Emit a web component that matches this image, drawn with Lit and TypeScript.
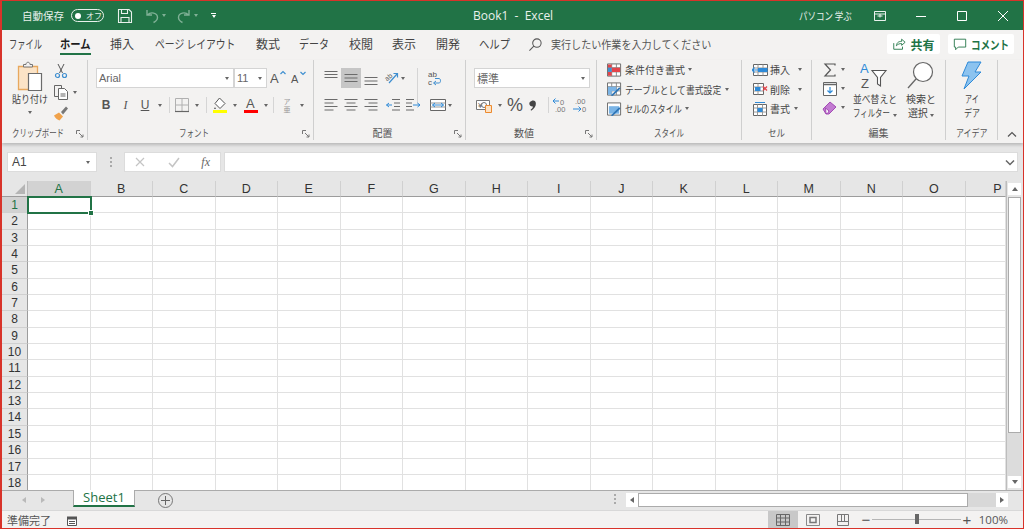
import { LitElement, html, css, svg } from 'lit';
import { customElement } from 'lit/decorators.js';

// small icon helper, every ribbon icon is drawn in a 16x16 box unless a size is given
const icon = (body: unknown, size = 16, box = 16) => html`<svg class="ico" width=${size} height=${size} viewBox="0 0 ${box} ${box}">${body}</svg>`;
const drop = html`<span class="drop"></span>`;
const launcher = html`<svg class="launch" width="8" height="8" viewBox="0 0 8 8" fill="none" stroke="#777"><path d="M.5 4V.5H4M3 3l4 4M7 4.5V7H4.5"/></svg>`;

// the reference font has narrow kana, so wide CJK text is squeezed to the measured width
const sq = (text: string, natural: number, width: number) => html`<span class="sq" style="width:${width}px"><span style="transform:scaleX(${width / natural})">${text}</span></span>`;

const lines = (rows: [number, number][], offsets: number[]) => svg`<g stroke="#6b6b6b">${rows.map(([a, b], i) => svg`<path d="M${a} ${offsets[i]}H${b}"/>`)}</g>`;

const icons = {
  save: svg`<g fill="none" stroke="#fff" stroke-width="1.1" opacity=".9"><path d="M1.5 1.5H12l2.5 2.5v10.5h-13z"/><path d="M4.5 1.5v4h6v-4M4 14.5v-5h8v5"/></g>`,
  undo: svg`<g fill="none" stroke="#7fb095" stroke-width="1.4"><path d="M3 2v5h5M3.5 7c3-3.5 10-2.5 10 2.5 0 2.5-2 4-4 5"/></g>`,
  redo: svg`<g fill="none" stroke="#7fb095" stroke-width="1.4"><path d="M13 2v5H8M12.5 7c-3-3.5-10-2.5-10 2.5 0 2.5 2 4 4 5"/></g>`,
  search: svg`<g fill="none" stroke="#555" stroke-width="1.1"><circle cx="9.5" cy="6.5" r="4.5"/><path d="M6.2 9.8L1.5 14.5"/></g>`,
  share: svg`<g fill="none" stroke="#217346"><path d="M2 7v7h10v-3M5 10c.5-4 3-5 6-5V2.5L15 6l-4 3.5v-2c-2.5 0-4 .5-6 2.5z"/></g>`,
  comment: svg`<path d="M1.5 2.5h13v9H6l-3 3v-3H1.5z" fill="none" stroke="#217346"/>`,
  paste: svg`<path d="M3.5 5.5h19v23h-19z" fill="#fbe3c6" stroke="#e8a85e" stroke-width="1.3"/><path d="M8.5 6V3.5H11c0-3 4-3 4 0h2.5V6z" fill="#f3f2f1" stroke="#777"/><path d="M13.5 12.5h13v17h-13z" fill="#fff" stroke="#6b6b6b" stroke-width="1.2"/>`,
  scissors: svg`<g fill="none" stroke="#555"><path d="M5 1l4.5 9M11 1L6.5 10"/></g><g fill="none" stroke="#3f8fd0" stroke-width="1.2"><circle cx="4.5" cy="12.5" r="2"/><circle cx="11.5" cy="12.5" r="2"/></g>`,
  copy: svg`<g fill="#f3f2f1" stroke="#666"><path d="M1.5 1.5h7v11h-7z"/><path d="M5.5 4.5h6l3 3v8h-9z" fill="#fff"/></g><path d="M7.5 10h5M7.5 12h5" stroke="#666"/>`,
  brush: svg`<path d="M1 10.5l5-3 4 4-3.5 4c-2-.5-4.5-2.5-5.5-5z" fill="#f0a24b"/><path d="M8 7l5-5.5 2 2-5 6z" fill="#777"/>`,
  growUp: svg`<text x="0" y="13" font-size="13" fill="#555" font-family="Liberation Sans">A</text><path d="M10.5 4L13 1.5 15.5 4" fill="none" stroke="#3f8fd0" stroke-width="1.2"/>`,
  growDown: svg`<text x="1" y="13" font-size="11" fill="#555" font-family="Liberation Sans">A</text><path d="M10.5 2L13 4.5 15.5 2" fill="none" stroke="#3f8fd0" stroke-width="1.2"/>`,
  border: svg`<path d="M1.5 1.5h13v13h-13zM8 1.5v13M1.5 8h13" fill="none" stroke="#b0b0b0"/><path d="M1 14.5h14" stroke="#666" stroke-width="1.2"/>`,
  fill: svg`<path d="M7.5 1L13 6.5l-5 5-5-5z" fill="#fff" stroke="#555"/><path d="M2 12l1-2 1 2z" fill="#555"/><path d="M1 13h14v3H1z" fill="#ffff00"/>`,
  fontColor: svg`<text x="3" y="11" font-size="13" fill="#555" font-family="Liberation Sans">A</text><path d="M1 13h14v3H1z" fill="#ff0000"/>`,
  orient: svg`<text x="2" y="10" font-size="7" fill="#555" font-family="Liberation Sans" transform="rotate(-40 5 8)">ab</text><path d="M6 13L14 4M10.5 3.5h4v4" fill="none" stroke="#3f8fd0" stroke-width="1.2"/>`,
  wrap: svg`<text x="2" y="7" font-size="8" fill="#555" font-family="Liberation Sans">ab</text><text x="2" y="15" font-size="8" fill="#555" font-family="Liberation Sans">c</text><path d="M8 13h5c2 0 2-4.5 0-4.5H9M10 11l-2.5 2 2.5 2" fill="none" stroke="#3f8fd0"/>`,
  merge: svg`<path d="M.5 2.5h15v11H.5z" fill="#fff" stroke="#666"/><path d="M.5 6h15M.5 10h15" stroke="#999"/><path d="M2.5 8h11M5 6L2.5 8 5 10M11 6l2.5 2L11 10" fill="none" stroke="#2e8ad8"/>`,
  outdent: svg`${lines([[7, 15], [9, 15], [9, 15], [7, 15]], [2.5, 6, 9.5, 13])}<path d="M7 8H1.5M4 6L1.5 8 4 10" fill="none" stroke="#2e8ad8"/>`,
  indent: svg`${lines([[1, 9], [1, 7], [1, 7], [1, 9]], [2.5, 6, 9.5, 13])}<path d="M8 8h7M12.5 6L15 8l-2.5 2" fill="none" stroke="#2e8ad8"/>`,
  account: svg`<path d="M.5 3.5h13v9H.5z" fill="#fff" stroke="#777"/><text x="2" y="11" font-size="8" fill="#666" font-family="Liberation Sans">¥</text><circle cx="8" cy="8" r="2.5" fill="none" stroke="#777"/><path d="M9.5 8.5h6v7h-6z" fill="#fde2c3" stroke="#ec8a2f"/>`,
  comma: svg`<path d="M4 3.5c2.5-1.5 5 0 5 3 0 3-2 6-5.5 8l-.5-1c1.5-1 2.5-2.5 2.700-3.800C3.500 10 1.500 8.500 1.500 6.500c0-1.500 1-2.500 2.500-3z" fill="#444"/>`,
  decUp: svg`<text x="8" y="7.5" font-size="7.5" fill="#777" font-family="Liberation Sans">0</text><text x="3" y="15" font-size="7.5" fill="#777" font-family="Liberation Sans">.00</text><path d="M7 4H1M3.5 1.5L1 4l2.5 2.5" fill="none" stroke="#2e8ad8"/>`,
  decDown: svg`<text x="3" y="7" font-size="7.5" fill="#777" font-family="Liberation Sans">.00</text><text x="10" y="15" font-size="7.5" fill="#777" font-family="Liberation Sans">0</text><path d="M1 12h8M6.5 9.5L9 12l-2.5 2.5" fill="none" stroke="#2e8ad8"/>`,
  condFmt: svg`<path d="M.5 1.5h14v13H.5z" fill="#fff" stroke="#666"/><path d="M1 5.500h13M1 10h13M5 1.500v13M10 1.500v13" stroke="#888"/><path d="M1 2h4v3.500H1zM5 5.500h9V10H5zM1 10h4v4H1z" fill="#e4444a"/><path d="M1 5.500h4V10H1z" fill="#3f8fd0"/>`,
  tableFmt: svg`<path d="M.5 1.5h14v13H.5z" fill="#fff" stroke="#666"/><path d="M1 5.500h13M1 10h13M5 1.500v13M10 1.500v13" stroke="#888"/><path d="M1 5.500h9V10H5v4H1z" fill="#7ab4e6"/><path d="M4 15l9-9 1.5 1.500L6 15.500z" fill="#2e75b6"/>`,
  cellFmt: svg`<path d="M.5 1.5h14v13H.5z" fill="#fff" stroke="#666"/><path d="M2 5h11v8H2z" fill="#7ab4e6"/><path d="M4 15l9-9 1.5 1.500L6 15.500z" fill="#2e75b6"/>`,
  cellInsert: svg`<path d="M1.5 2.5h14v11h-14z" fill="#fff" stroke="#666"/><path d="M1.5 6h14M1.5 10h14M6 2.5v11M11 2.5v11" stroke="#999"/><path d="M6 6h9.500v4H6z" fill="#2e8ad8"/><path d="M6 8H0M2.500 5.500L0 8l2.500 2.500" fill="none" stroke="#2e8ad8" stroke-width="1.2"/>`,
  cellDelete: svg`<path d="M1.5 2.5h10v11h-10z" fill="#fff" stroke="#666"/><path d="M1.5 6h10M1.5 10h10M6 2.5v11" stroke="#999"/><path d="M3 6h5.500v4H3z" fill="#2e8ad8"/><path d="M11 5.500l4 4M15 5.500l-4 4" stroke="#e4444a" stroke-width="1.3"/>`,
  cellFormat: svg`<path d="M1.5 3.5h13v11h-13z" fill="#fff" stroke="#666"/><path d="M1.5 7h13M1.5 11h13M5.5 3.5v11M10.5 3.5v11" stroke="#999"/><path d="M5.5 7h5v4h-5z" fill="#2e8ad8"/><path d="M3 1.5h10" stroke="#2e8ad8"/>`,
  sum: svg`<path d="M13 3.5V2H3l5.5 6L3 14h10v-1.5" fill="none" stroke="#555" stroke-width="1.2"/>`,
  fillDown: svg`<path d="M1.5 1.5h13v13h-13z" fill="#fff" stroke="#666"/><path d="M1.5 3.5h13" stroke="#666" stroke-width="1.5"/><path d="M8 6v6M5.5 9.5L8 12l2.5-2.5" fill="none" stroke="#2e8ad8" stroke-width="1.2"/>`,
  clear: svg`<path d="M1 9l7-7 6 5-7 7H4z" fill="#c27bd1" stroke="#a24ab4"/><path d="M3.5 8L7 11l-1.5 2.5H4z" fill="#fff" stroke="#a24ab4"/>`,
  sort: svg`<text x="0" y="12" font-size="13" fill="#2e8ad8" font-family="Liberation Sans">A</text><text x="1" y="27" font-size="13" fill="#555" font-family="Liberation Sans">Z</text><path d="M12 9.5h14l-5.5 7V25l-3-2v-6.5z" fill="#fff" stroke="#555" stroke-width="1.1"/>`,
  find: svg`<circle cx="17" cy="11" r="9.5" fill="#fff" stroke="#666" stroke-width="1.2"/><path d="M10 18l-8 9" stroke="#666" stroke-width="1.3"/>`,
  idea: svg`<path d="M11 1h13l-6 10h6L7 28l5-13H5z" fill="#8cc3ef" stroke="#2e8ad8"/>`,
};

const COLUMNS = ['A', 'B', 'C', 'D', 'E', 'F', 'G', 'H', 'I', 'J', 'K', 'L', 'M', 'N', 'O', 'P'];
const ROWS = Array.from({ length: 18 }, (_, i) => i + 1);
// label, natural width at 12px, width in the picture, gap after it
const TABS: [string, number, number, number][] = [
  ['ファイル', 48, 33, 18],
  ['ホーム', 36, 31, 19],
  ['挿入', 24, 24, 21],
  ['ページ レイアウト', 98, 80, 21],
  ['数式', 24, 24, 19],
  ['データ', 36, 30, 20],
  ['校閲', 24, 24, 19],
  ['表示', 24, 24, 20],
  ['開発', 24, 24, 19],
  ['ヘルプ', 36, 31, 18],
];

@customElement('app-root')
export class AppRoot extends LitElement {
  static styles = css`
    :host {
      display: block;
      width: 1024px;
      height: 529px;
      box-sizing: border-box;
      overflow: hidden;
      border: solid #d8332a;
      border-width: 1px 1px 1px 2px;
      background: #e6e6e6;
      font-family: "Noto Sans CJK JP", "Liberation Sans", sans-serif;
      font-size: 11px;
      color: #444;
    }
    .ico { display: block; flex: none; }
    .drop {
      display: inline-block;
      flex: none;
      width: 0;
      height: 0;
      border: 2.5px solid transparent;
      border-top: 3px solid #666;
      border-bottom: 0;
    }
    .sq { display: inline-block; flex: none; white-space: pre; text-align: left; }
    .sq > span { display: inline-block; transform-origin: 0 50%; }

    /* title bar */
    .title {
      height: 29px;
      background: #217346;
      color: #e9f1ec;
      display: flex;
      align-items: center;
      font-size: 10.5px;
      padding-left: 20px;
      position: relative;
    }
    .toggle {
      width: 33px;
      height: 13px;
      box-sizing: border-box;
      border: 1px solid #e9f1ec;
      border-radius: 7px;
      margin-left: 7px;
      display: flex;
      align-items: center;
      gap: 5px;
      padding-left: 3px;
      font-size: 8px;
    }
    .toggle i { width: 6px; height: 6px; border-radius: 50%; background: #fff; flex: none; }
    .title .save { margin-left: 13px; }
    .title .undo { margin-left: 11px; }
    .title .dim { border-top-color: #7fb095; margin-left: 2px; }
    .title .redo { margin-left: 10px; }
    .more { margin-left: 13px; width: 5px; display: flex; flex-direction: column; align-items: center; gap: 1px; }
    .more i { width: 5px; height: 1px; background: #fff; }
    .more .drop { border-top-color: #fff; }
    .doc { position: absolute; left: 471px; font-family: "Open Sans", sans-serif; font-size: 12px; white-space: pre; }
    .winctl { margin-left: auto; display: flex; align-items: center; }
    .user { margin-right: 5px; }
    .winbtn { width: 41px; display: flex; justify-content: center; }

    /* tab row */
    .tabs {
      height: 30px;
      box-sizing: border-box;
      padding: 0 0 2px 7px;
      background: #f3f2f1;
      display: flex;
      align-items: center;
      font-size: 12px;
      color: #444;
    }
    .tab { position: relative; white-space: nowrap; line-height: 28px; flex: none; }
    .tab.on { font-weight: 700; color: #1d1d1d; }
    .tab.on::after {
      content: '';
      position: absolute;
      left: 0;
      right: 0;
      bottom: 3px;
      height: 2px;
      background: #217346;
    }
    .tell { display: flex; align-items: center; gap: 8px; font-size: 11px; color: #555; }
    .actions { margin-left: auto; margin-right: 9px; display: flex; gap: 8px; }
    .pill {
      height: 20px;
      background: #fff;
      border-radius: 2px;
      display: flex;
      align-items: center;
      justify-content: center;
      gap: 4px;
      font-weight: 700;
      color: #217346;
      font-size: 12px;
    }
    .pill.share { width: 53px; }
    .pill.note { width: 66px; }

    /* ribbon */
    .ribbon {
      height: 83px;
      background: #f3f2f1;
      display: flex;
      box-shadow: 0 2px 3px rgba(0, 0, 0, .2);
      position: relative;
    }
    .group {
      flex: none;
      display: flex;
      flex-direction: column;
      box-sizing: border-box;
      border-right: 1px solid #cfcfcf;
      margin-bottom: 3px;
      position: relative;
    }
    .body { flex: 1; display: flex; min-height: 0; }
    .cap { text-align: center; font-size: 10px; line-height: 14px; height: 14px; color: #555; }
    .cap.lnch { padding-right: 14px; }
    .launch { position: absolute; right: 3px; bottom: 2px; }
    .row { display: flex; align-items: center; height: 20px; }
    .stack { display: flex; flex-direction: column; }
    .vsep { width: 1px; height: 16px; background: #d5d5d5; flex: none; }
    .big {
      display: flex;
      flex-direction: column;
      align-items: center;
      padding-top: 1px;
      font-size: 10px;
      line-height: 14px;
      text-align: center;
      white-space: nowrap;
      color: #444;
    }
    .big .ico { margin-bottom: 1px; }

    .g-clip { width: 86px; }
    .g-clip .body { padding-left: 5px; }
    .g-clip .big { width: 46px; }
    .g-clip .big .drop { margin-top: 5px; }
    .g-clip .stack { padding-top: 3px; gap: 5px; }
    .g-clip .row { gap: 4px; height: 16px; }

    .g-font { width: 226px; }
    .g-font .body { padding-left: 8px; }
    .g-font .stack, .g-num .stack, .g-align .stack { padding-top: 8px; gap: 7px; }
    .select {
      box-sizing: border-box;
      height: 20px;
      background: #fff;
      border: 1px solid #d4d4d4;
      display: flex;
      align-items: center;
      justify-content: space-between;
      padding: 0 4px 0 2px;
      color: #666;
      font-family: "Liberation Sans", sans-serif;
      font-size: 11px;
      flex: none;
    }
    .select.jp { font-family: "Noto Sans CJK JP", sans-serif; }
    .tool { display: flex; justify-content: center; align-items: center; flex: none; }
    .b { font: 700 12px "Liberation Sans", sans-serif; color: #555; }
    .i { font: italic 12px "Liberation Serif", serif; color: #555; }
    .u { font: 12px "Liberation Sans", sans-serif; color: #555; text-decoration: underline; }
    .phon { display: flex; flex-direction: column; font-size: 7px; line-height: 8px; color: #999; text-align: center; }

    .g-align { width: 152px; }
    .g-align .body { padding-left: 7px; }
    .g-align .tool { width: 20px; height: 20px; }
    .g-align .tool.on { background: #c6c6c6; }

    .g-num { width: 131px; }
    .g-num .body { padding-left: 8px; }
    .pct { font: 18px "Liberation Sans", sans-serif; color: #555; }

    .g-style { width: 145px; }
    .g-style .body { padding-left: 10px; }
    .g-style .row { gap: 3px; height: 19.5px; white-space: nowrap; font-size: 10px; }
    .g-style .ico { width: 15px; height: 16px; }
    .g-cell { width: 70px; }
    .g-cell .body { padding-left: 10px; }
    .g-cell .row { gap: 2px; height: 19.5px; white-space: nowrap; font-size: 10px; }
    .g-edit { width: 134px; }
    .g-edit .stack { padding-left: 10px; width: 39.5px; box-sizing: border-box; flex: none; }
    .g-edit .row { gap: 3px; height: 19px; }
    .g-idea { width: 52px; }
    .g-idea .big { width: 100%; }
    .collapse { position: absolute; right: 6px; bottom: 5px; }

    /* formula bar */
    .formula {
      height: 38px;
      box-sizing: border-box;
      padding: 9px 5px 0 5px;
      display: flex;
      background: #e6e6e6;
      align-items: flex-start;
    }
    .box {
      height: 20px;
      box-sizing: border-box;
      background: #fff;
      border: 1px solid #dcdcdc;
      display: flex;
      align-items: center;
    }
    .name { width: 90px; justify-content: space-between; padding: 0 6px 0 4px; font: 12px "Liberation Sans", sans-serif; color: #444; }
    .dots { width: 27px; display: flex; justify-content: center; padding-top: 5px; }
    .dots i, .hdots i { display: block; width: 2px; height: 2px; background: #aaa; margin-bottom: 2px; }
    .fx { width: 97px; justify-content: space-between; padding: 0 10px 0 8px; margin-right: 3px; }
    .fx em { font: italic 12px "Liberation Serif", serif; color: #666; }
    .input { flex: 1; justify-content: flex-end; padding-right: 2px; }

    /* sheet */
    .sheet { display: flex; height: 309px; }
    .grid {
      width: 1004px;
      flex: none;
      display: grid;
      grid-template-columns: 26px repeat(15, 62.5px) 40px;
      grid-template-rows: 16px;
      grid-auto-rows: 16.35px;
      background: #fff;
      overflow: hidden;
      align-content: start;
      font: 12px "Liberation Sans", sans-serif;
      color: #333;
    }
    .corner, .ch { box-sizing: border-box; background: #e6e6e6; border-bottom: 1px solid #9c9c9c; }
    .corner { position: relative; border-right: 1px solid #bbb; }
    .corner::after {
      content: '';
      position: absolute;
      right: 2px;
      bottom: 2px;
      border: solid transparent;
      border-width: 0 0 10px 10px;
      border-bottom-color: #b5b5b5;
    }
    .ch { text-align: center; line-height: 16px; border-right: 1px solid #d0d0d0; font-size: 12.5px; }
    .ch.on { background: #d2d2d2; color: #217346; border-bottom: 1px solid #217346; }
    .ch.last { text-align: right; padding-right: 3px; }
    .rh {
      background: #e6e6e6;
      text-align: center;
      box-sizing: border-box;
      border-right: 1px solid #9c9c9c;
      border-bottom: 1px solid #d0d0d0;
      line-height: 17px;
      font-size: 12px;
    }
    .rh.on { background: #d2d2d2; color: #217346; }
    .cell { box-sizing: border-box; border-right: 1px solid #e1e1e1; border-bottom: 1px solid #e1e1e1; position: relative; }
    .cell.sel { outline: 2px solid #217346; outline-offset: -1px; z-index: 1; }
    .cell.sel::after {
      content: '';
      position: absolute;
      right: -4px;
      bottom: -4px;
      width: 6px;
      height: 6px;
      background: #217346;
      border: 1px solid #fff;
      box-sizing: border-box;
    }
    .vbar {
      flex: 1;
      background: #e6e6e6;
      display: flex;
      flex-direction: column;
      align-items: center;
      padding: 2px 1px 2px 0;
      box-sizing: border-box;
      border-left: 1px solid #bdbdbd;
    }
    .sb { background: #fff; display: flex; align-items: center; justify-content: center; flex: none; }
    .vbar .sb { width: 13px; height: 12px; }
    .vthumb { width: 13px; box-sizing: border-box; height: 236px; margin-top: 2px; background: #fff; border: 1px solid #ababab; flex: none; }
    .vtrack { flex: 1; width: 100%; background: #dcdcdc; }
    .up { border: 3px solid transparent; border-bottom: 4px solid #666; border-top: 0; }
    .down { border: 3px solid transparent; border-top: 4px solid #666; border-bottom: 0; }
    .left { border: 3px solid transparent; border-right: 4px solid #666; border-left: 0; }
    .right { border: 3px solid transparent; border-left: 4px solid #666; border-right: 0; }

    /* sheet tabs */
    .sheets {
      height: 20px;
      background: #e6e6e6;
      display: flex;
      align-items: flex-start;
      border-top: 1px solid #ababab;
      box-sizing: border-box;
    }
    .nav { width: 71px; box-sizing: border-box; padding-right: 8px; display: flex; align-items: center; justify-content: center; gap: 15px; height: 18px; opacity: .35; }
    .sheet-tab {
      width: 62px;
      height: 17px;
      margin-top: -1px;
      box-sizing: border-box;
      background: #fff;
      border: solid #ababab;
      border-width: 0 1px;
      border-bottom: 2px solid #217346;
      color: #217346;
      font: 13px "Open Sans", sans-serif;
      text-align: center;
      line-height: 15px;
    }
    .add {
      margin-left: 23px;
      margin-top: 2px;
      width: 13px;
      height: 13px;
      border: 1px solid #777;
      border-radius: 50%;
      color: #666;
      display: flex;
      justify-content: center;
      align-items: center;
    }
    .hdots { margin-left: auto; margin-right: 10px; padding-top: 3px; }
    .hbar { display: flex; width: 382px; margin-right: 15px; margin-top: 2px; }
    .hbar .sb { width: 12px; height: 14px; }
    .hthumb { width: 330px; height: 14px; box-sizing: border-box; background: #fff; border: 1px solid #ababab; }
    .htrack { flex: 1; background: #d8d8d8; }

    /* status bar */
    .status {
      height: 18px;
      background: #f3f2f1;
      border-top: 1px solid #d8d8d8;
      box-sizing: border-box;
      display: flex;
      align-items: center;
      padding-left: 5px;
      font-size: 11px;
      color: #555;
    }
    .status .mac { margin-left: 15px; }
    .views { margin-left: auto; display: flex; align-items: center; height: 100%; }
    .view { width: 30px; height: 100%; display: flex; align-items: center; justify-content: center; }
    .view.on { background: #c8c8c8; }
    .zoom { display: flex; align-items: center; margin-left: 3px; margin-right: 15px; }
    .zoom b { font: 400 15px "Liberation Sans", sans-serif; color: #555; width: 10px; text-align: center; }
    .track { width: 89px; height: 1px; background: #b5b5b5; margin: 0 1px; position: relative; }
    .track i { position: absolute; left: 43px; top: -5px; width: 4px; height: 10px; background: #666; }
    .pctz { font: 11.5px "Open Sans", sans-serif; margin-left: 7px; }
  `;

  render() {
    return html`
      ${this.renderTitle()}
      ${this.renderTabs()}
      ${this.renderRibbon()}
      ${this.renderFormula()}
      ${this.renderSheet()}
      ${this.renderSheetTabs()}
      ${this.renderStatus()}
    `;
  }

  renderTitle() {
    return html`
      <div class="title">
        <span>自動保存</span>
        <span class="toggle"><i></i>オフ</span>
        <span class="save">${icon(icons.save)}</span>
        <span class="undo">${icon(icons.undo)}</span>
        <span class="drop dim"></span>
        <span class="redo">${icon(icons.redo)}</span>
        <span class="drop dim"></span>
        <span class="more"><i></i>${drop}</span>
        <span class="doc">Book1  -  Excel</span>
        <div class="winctl">
          <span class="user">${sq('パソコン 学ぶ', 68, 55)}</span>
          <span class="winbtn">${icon(svg`<path d="M1.5 2.5h11v9h-11zM1.5 5h11M7 5v3.5M4.5 7h5" fill="none" stroke="#fff" opacity=".9"/>`, 14, 14)}</span>
          <span class="winbtn">${icon(svg`<path d="M2 7.5h10" stroke="#fff"/>`, 14, 14)}</span>
          <span class="winbtn">${icon(svg`<path d="M2.5 2.5h9v9h-9z" fill="none" stroke="#fff"/>`, 14, 14)}</span>
          <span class="winbtn">${icon(svg`<path d="M2 2l10 10M12 2L2 12" fill="none" stroke="#fff"/>`, 14, 14)}</span>
        </div>
      </div>
    `;
  }

  renderTabs() {
    return html`
      <div class="tabs">
        ${TABS.map(([t, natural, width, gap], i) => html`<span class="tab ${i === 1 ? 'on' : ''}" style="margin-right:${gap}px;width:${width}px">${sq(t, natural, width)}</span>`)}
        <div class="tell">${icon(icons.search, 15)}${sq('実行したい作業を入力してください', 176, 161)}</div>
        <div class="actions">
          <div class="pill share">${icon(icons.share, 14)}共有</div>
          <div class="pill note">${icon(icons.comment, 14)}${sq('コメント', 48, 38)}</div>
        </div>
      </div>
    `;
  }

  renderRibbon() {
    return html`
      <div class="ribbon">
        ${this.renderClipboard()}
        ${this.renderFont()}
        ${this.renderAlign()}
        ${this.renderNumber()}
        ${this.renderStyles()}
        ${this.renderCells()}
        ${this.renderEdit()}
        ${this.renderIdea()}
        <svg class="collapse" width="10" height="7" viewBox="0 0 10 7" fill="none" stroke="#555" stroke-width="1.2"><path d="M1 5.5l4-4 4 4"/></svg>
      </div>
    `;
  }

  renderClipboard() {
    return html`
      <div class="group g-clip">
        <div class="body">
          <div class="big">
            ${icon(icons.paste, 30, 30)}
            ${sq('貼り付け', 40, 36)}
            <span class="drop"></span>
          </div>
          <div class="stack">
            <div class="row">${icon(icons.scissors)}</div>
            <div class="row">${icon(icons.copy)}${drop}</div>
            <div class="row">${icon(icons.brush)}</div>
          </div>
        </div>
        <div class="cap lnch">${sq('クリップボード', 70, 52)}</div>
        ${launcher}
      </div>
    `;
  }

  renderFont() {
    const tool = (w: number, c: unknown) => html`<span class="tool" style="width:${w}px">${c}</span>`;
    const sep = (l: number, r: number) => html`<span class="vsep" style="margin:0 ${r}px 0 ${l}px"></span>`;
    return html`
      <div class="group g-font">
        <div class="body">
          <div class="stack">
            <div class="row">
              <div class="select" style="width:138px">Arial${drop}</div>
              <div class="select" style="width:33px">11${drop}</div>
              ${tool(21, icon(icons.growUp))}
              ${tool(20, icon(icons.growDown))}
            </div>
            <div class="row">
              ${tool(20, html`<span class="b">B</span>`)}
              ${tool(19, html`<span class="i">I</span>`)}
              ${tool(20, html`<span class="u">U</span>`)}
              ${tool(10, drop)}
              ${sep(4, 3.5)}
              ${tool(17, icon(icons.border))}
              ${tool(13, drop)}
              ${sep(2.5, 3.5)}
              ${tool(18, icon(icons.fill))}
              ${tool(13, drop)}
              ${tool(18, icon(icons.fontColor))}
              ${tool(12, drop)}
              ${sep(1.5, 5)}
              ${tool(16, html`<span class="phon"><span>ア</span><span>亜</span></span>`)}
              ${tool(14, drop)}
            </div>
          </div>
        </div>
        <div class="cap lnch">${sq('フォント', 40, 30)}</div>
        ${launcher}
      </div>
    `;
  }

  renderAlign() {
    const flat = (offsets: number[]) => icon(lines(offsets.map(() => [1.5, 14.5]), offsets));
    const para = (rows: [number, number][]) => icon(lines(rows, [2.5, 6, 9.5, 13]));
    const tool = (c: unknown, on = false) => html`<span class="tool ${on ? 'on' : ''}">${c}</span>`;
    return html`
      <div class="group g-align">
        <div class="body">
          <div class="stack">
            <div class="row">
              ${tool(flat([1.5, 4.5, 7.5]))}
              ${tool(flat([4.5, 8, 11.5]), true)}
              ${tool(flat([7.5, 11, 14.5]))}
              ${tool(icon(icons.orient))}
              ${drop}
              <span class="vsep" style="margin:0 6px 0 12px;height:36px;align-self:flex-start"></span>
              ${tool(icon(icons.wrap))}
            </div>
            <div class="row">
              ${tool(para([[1.5, 14.5], [1.5, 10.5], [1.5, 14.5], [1.5, 10.5]]))}
              ${tool(para([[1.5, 14.5], [3.5, 12.5], [1.5, 14.5], [3.5, 12.5]]))}
              ${tool(para([[1.5, 14.5], [5.5, 14.5], [1.5, 14.5], [5.5, 14.5]]))}
              <span style="width:2px"></span>
              ${tool(icon(icons.outdent))}
              ${tool(icon(icons.indent))}
              <span style="width:5px"></span>
              ${tool(icon(icons.merge))}
              ${drop}
            </div>
          </div>
        </div>
        <div class="cap lnch">配置</div>
        ${launcher}
      </div>
    `;
  }

  renderNumber() {
    const tool = (w: number, c: unknown) => html`<span class="tool" style="width:${w}px">${c}</span>`;
    return html`
      <div class="group g-num">
        <div class="body">
          <div class="stack">
            <div class="row"><div class="select jp" style="width:116px">標準${drop}</div></div>
            <div class="row">
              ${tool(20, icon(icons.account))}
              ${tool(11, drop)}
              ${tool(20, html`<span class="pct">%</span>`)}
              ${tool(20, icon(icons.comma, 14))}
              <span class="vsep" style="margin:0 3px"></span>
              ${tool(16, icon(icons.decUp))}
              <span style="width:4px"></span>
              ${tool(16, icon(icons.decDown))}
            </div>
          </div>
        </div>
        <div class="cap lnch">数値</div>
        ${launcher}
      </div>
    `;
  }

  renderStyles() {
    return html`
      <div class="group g-style">
        <div class="body">
          <div class="stack">
            <div class="row">${icon(icons.condFmt)}<span>条件付き書式</span>${drop}</div>
            <div class="row">${icon(icons.tableFmt)}${sq('テーブルとして書式設定', 110, 97)}${drop}</div>
            <div class="row">${icon(icons.cellFmt)}${sq('セルのスタイル', 70, 57)}${drop}</div>
          </div>
        </div>
        <div class="cap">${sq('スタイル', 40, 30)}</div>
      </div>
    `;
  }

  renderCells() {
    return html`
      <div class="group g-cell">
        <div class="body">
          <div class="stack">
            <div class="row">${icon(icons.cellInsert)}<span>挿入</span><span class="drop" style="margin-left:6px"></span></div>
            <div class="row">${icon(icons.cellDelete)}<span>削除</span><span class="drop" style="margin-left:6px"></span></div>
            <div class="row">${icon(icons.cellFormat)}<span>書式</span><span class="drop" style="margin-left:2px"></span></div>
          </div>
        </div>
        <div class="cap">${sq('セル', 20, 17)}</div>
      </div>
    `;
  }

  renderEdit() {
    return html`
      <div class="group g-edit">
        <div class="body">
          <div class="stack">
            <div class="row">${icon(icons.sum)}${drop}</div>
            <div class="row">${icon(icons.fillDown)}${drop}</div>
            <div class="row">${icon(icons.clear)}${drop}</div>
          </div>
          <div class="big" style="width:47px">
            ${icon(icons.sort, 30, 30)}
            ${sq('並べ替えと', 50, 44)}
            <span>${sq('フィルター', 50, 37)} ${drop}</span>
          </div>
          <div class="big" style="width:45px">
            ${icon(icons.find, 30, 30)}
            <span>検索と</span>
            <span>選択 ${drop}</span>
          </div>
        </div>
        <div class="cap">編集</div>
      </div>
    `;
  }

  renderIdea() {
    return html`
      <div class="group g-idea">
        <div class="body">
          <div class="big">
            ${icon(icons.idea, 30, 30)}
            ${sq('アイ', 20, 14)}
            ${sq('デア', 20, 16)}
          </div>
        </div>
        <div class="cap">${sq('アイデア', 40, 32)}</div>
      </div>
    `;
  }

  renderFormula() {
    return html`
      <div class="formula">
        <div class="box name"><span>A1</span>${drop}</div>
        <div class="dots"><div><i></i><i></i><i></i></div></div>
        <div class="box fx">
          ${icon(svg`<path d="M3 3l8 8M11 3l-8 8" stroke="#c4c4c4" stroke-width="1.2" fill="none"/>`, 14, 14)}
          ${icon(svg`<path d="M2 8l3.5 3.5L12 3" stroke="#c4c4c4" stroke-width="1.5" fill="none"/>`, 14, 14)}
          <em>fx</em>
        </div>
        <div class="box input">
          <svg width="10" height="7" viewBox="0 0 10 7" fill="none" stroke="#666" stroke-width="1.5"><path d="M1 1.5l4 4 4-4"/></svg>
        </div>
      </div>
    `;
  }

  renderSheet() {
    return html`
      <div class="sheet">
        <div class="grid">
          <div class="corner"></div>
          ${COLUMNS.map((c, i) => html`<div class="ch ${i === 0 ? 'on' : ''} ${i === 15 ? 'last' : ''}">${c}</div>`)}
          ${ROWS.map((r) => html`
            <div class="rh ${r === 1 ? 'on' : ''}">${r}</div>
            ${COLUMNS.map((_, i) => html`<div class="cell ${r === 1 && i === 0 ? 'sel' : ''}"></div>`)}
          `)}
        </div>
        <div class="vbar">
          <div class="sb"><span class="up"></span></div>
          <div class="vthumb"></div>
          <div class="vtrack"></div>
          <div class="sb"><span class="down"></span></div>
        </div>
      </div>
    `;
  }

  renderSheetTabs() {
    return html`
      <div class="sheets">
        <div class="nav"><span class="left"></span><span class="right"></span></div>
        <div class="sheet-tab">Sheet1</div>
        <div class="add">${icon(svg`<path d="M5.5 1v9M1 5.5h9" stroke="#666"/>`, 11, 11)}</div>
        <div class="hdots"><i></i><i></i><i></i></div>
        <div class="hbar">
          <div class="sb"><span class="left"></span></div>
          <div class="hthumb"></div>
          <div class="htrack"></div>
          <div class="sb"><span class="right"></span></div>
        </div>
      </div>
    `;
  }

  renderStatus() {
    return html`
      <div class="status">
        <span>準備完了</span>
        <span class="mac">${icon(svg`<path d="M1.5 3.5h9v8h-9z" fill="#fff" stroke="#555"/><path d="M1 2.5h10v3H1z" fill="#555"/><path d="M3 7.5h6M3 9.5h6" stroke="#555"/>`, 12, 12)}</span>
        <div class="views">
          <span class="view on">${icon(svg`<path d="M1.5 2.5h13v11h-13zM1.5 6h13M1.5 10h13M5.5 2.5v11M10.5 2.5v11" fill="none" stroke="#666"/>`)}</span>
          <span class="view">${icon(svg`<path d="M1.5 2.5h13v11h-13z" fill="none" stroke="#888"/><path d="M5 5.5h6v5H5z" fill="none" stroke="#777" stroke-width="1.5"/>`)}</span>
          <span class="view">${icon(svg`<path d="M2.5 2.5h11v11h-11zM2.5 9.5h11M6.5 2.5v7M9.5 2.5v7" fill="none" stroke="#777"/>`)}</span>
          <div class="zoom">
            <b>−</b>
            <div class="track"><i></i></div>
            <b>+</b>
            <span class="pctz">100%</span>
          </div>
        </div>
      </div>
    `;
  }
}
